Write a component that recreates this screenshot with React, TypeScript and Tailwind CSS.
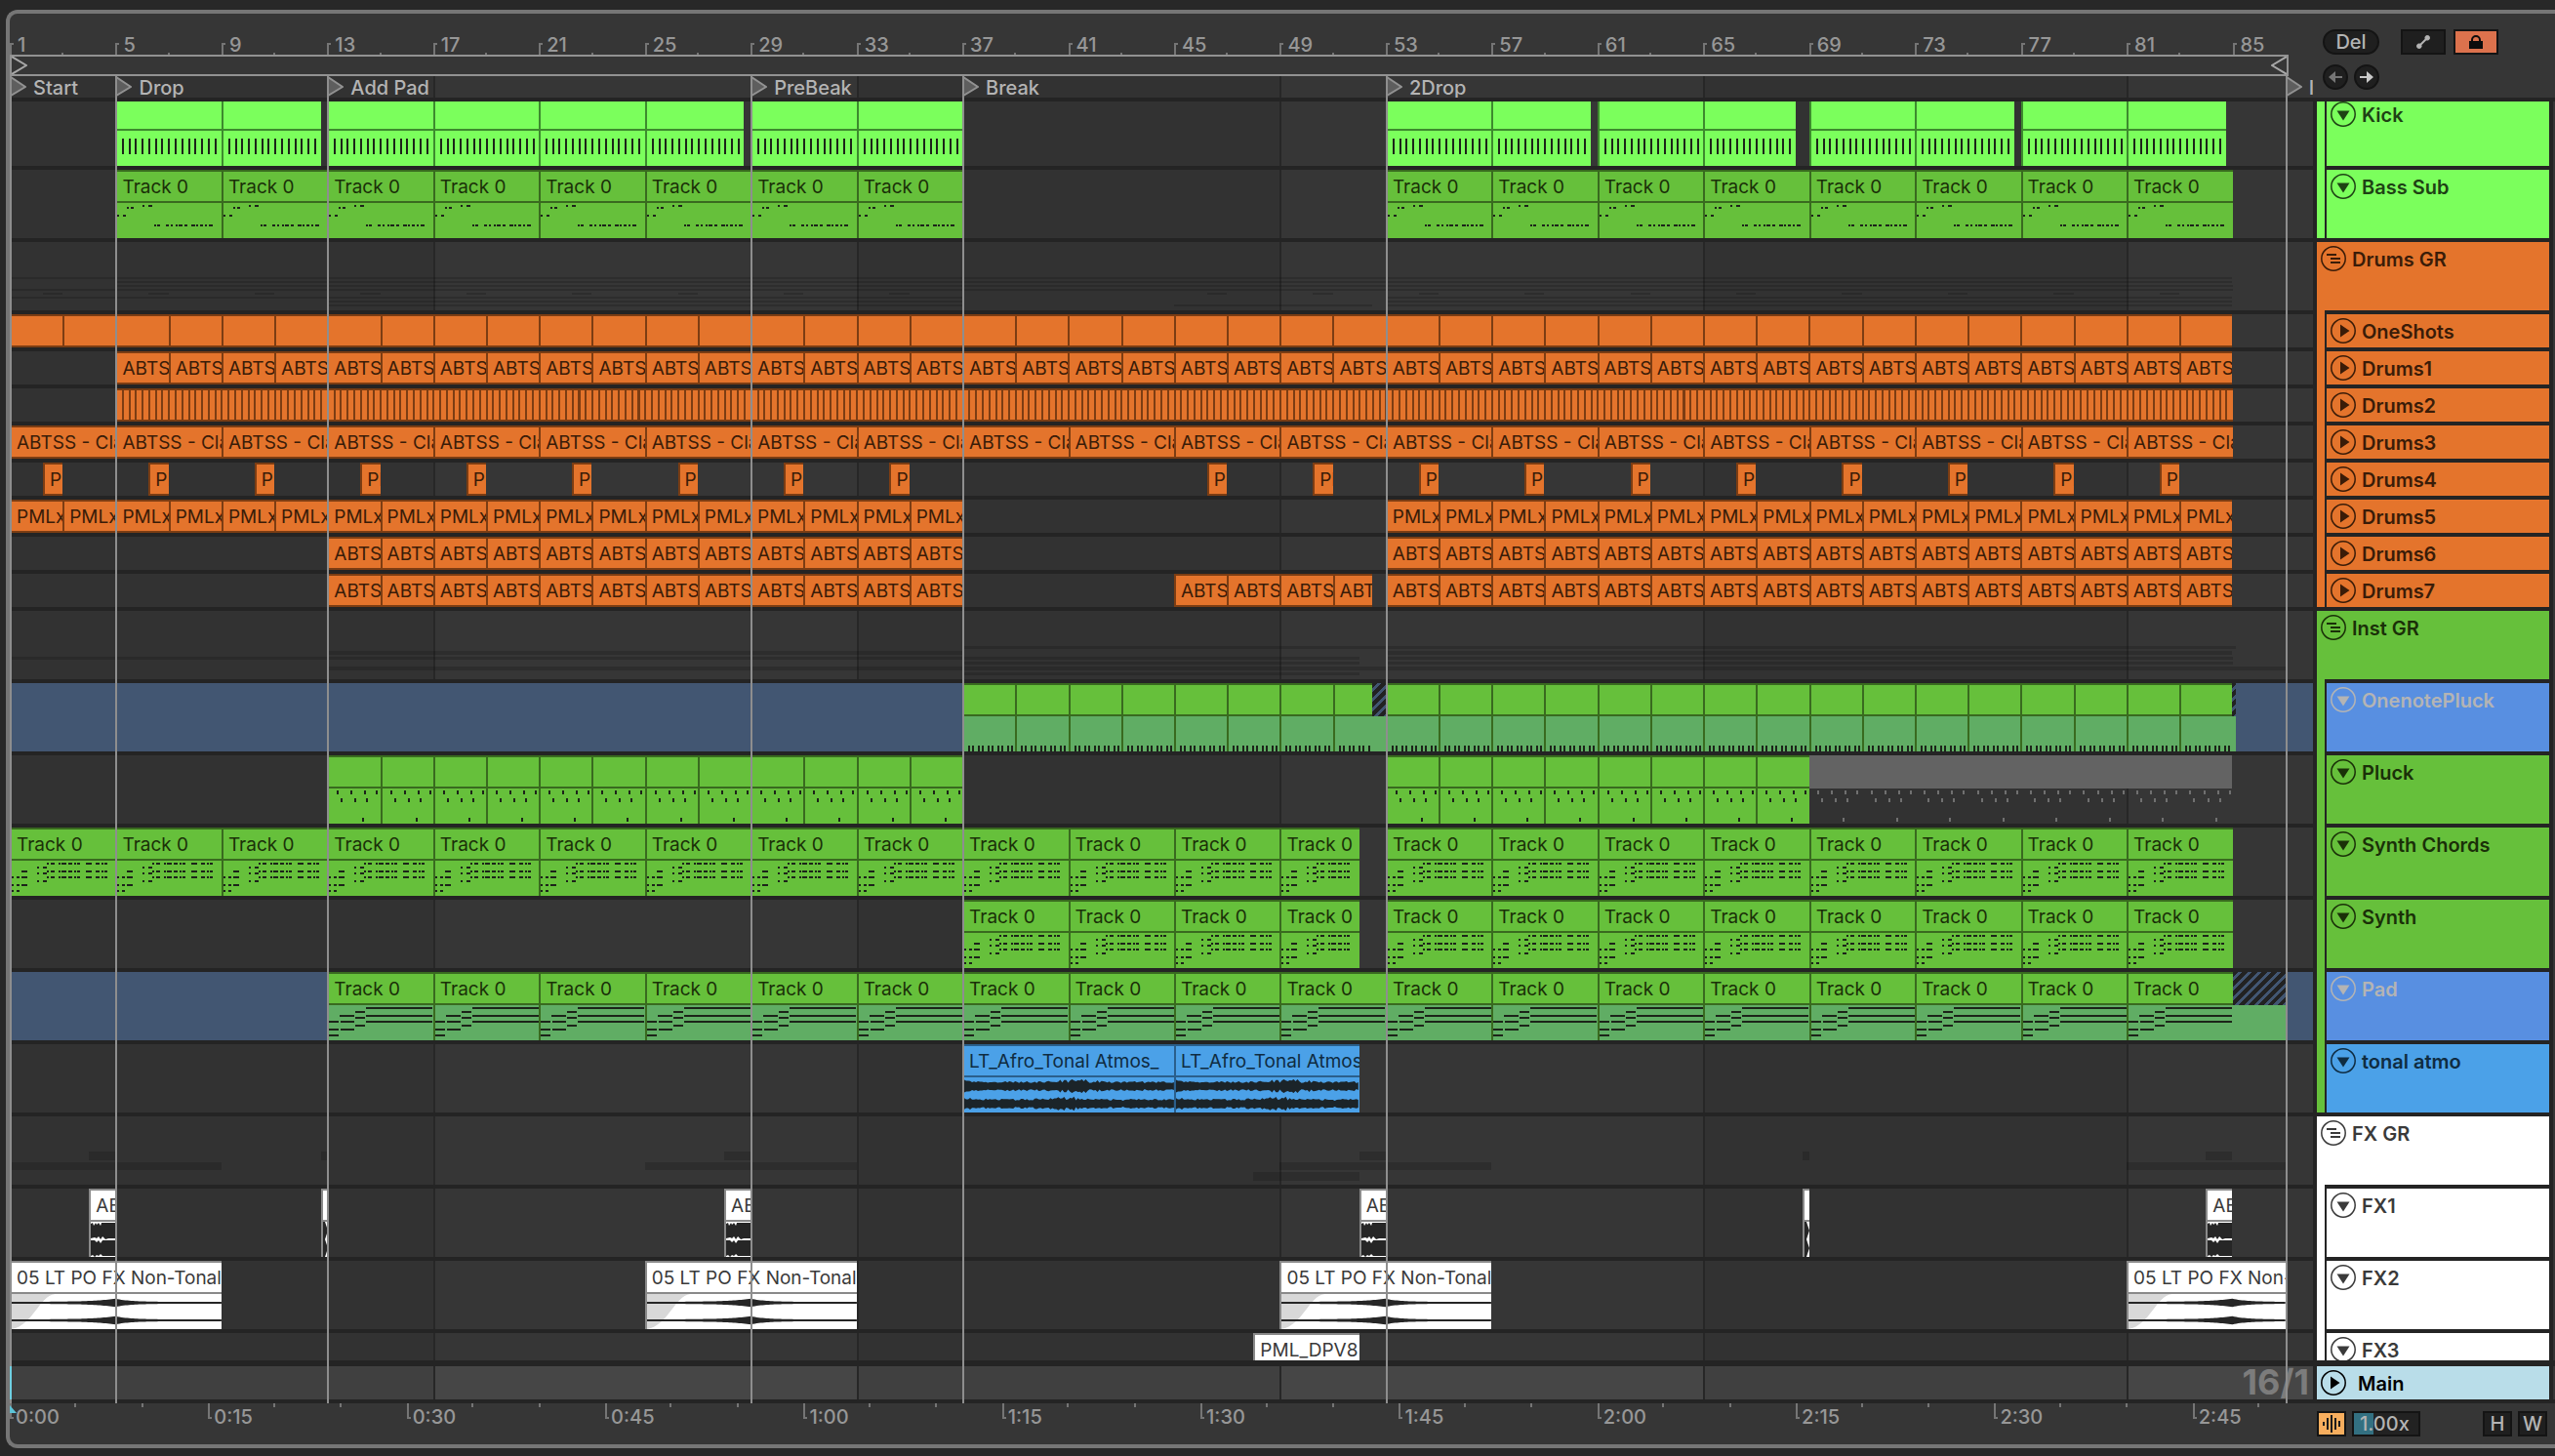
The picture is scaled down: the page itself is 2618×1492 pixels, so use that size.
import React from 'react';
import { clsx } from 'clsx';

type TTone = 'lime' | 'green' | 'orange' | 'blue' | 'white' | 'muted';
type TArt = 'kick' | 'bass' | 'oneNote' | 'pluck' | 'chords' | 'pad' | 'wave' | 'riser' | 'hit' | 'hats';
type TFold = 'open' | 'closed' | 'group';

interface IClip {
    start: number;
    end: number;
    label?: string;
    hatch?: boolean;
    tone?: TTone;
}

interface ITrack {
    name: string;
    tone: TTone;
    fold: TFold;
    art?: TArt;
    selected?: boolean;
    cut?: boolean;
    first?: boolean;
    clips: IClip[];
}

interface IGroup {
    name?: string;
    tone: TTone;
    tracks: ITrack[];
}

// Bars shown across the arrangement
const BARS = 87.04;
// Units per bar used by the clip drawings
const UNIT = 27;

const pct = (bars: number) => `${(bars / BARS) * 100}%`;

// Splits a range in equal clips, the last one may be shorter
const run = (start: number, end: number, size: number, label?: string): IClip[] => {
    const clips: IClip[] = [];
    for (let bar = start; bar < end; bar += size) {
        clips.push({ start: bar, end: Math.min(bar + size, end), label });
    }
    return clips;
};

const groups: IGroup[] = [
    {
        tone: 'lime',
        tracks: [
            {
                name: 'Kick', tone: 'lime', fold: 'open', art: 'kick', first: true,
                clips: [
                    ...run(5, 12.75, 4), ...run(13, 28.75, 4), ...run(29, 37, 4),
                    ...run(53, 60.75, 4), ...run(61, 68.5, 4), ...run(69, 76.75, 4), ...run(77, 84.75, 4),
                ],
            },
            {
                name: 'Bass Sub', tone: 'green', fold: 'open', art: 'bass',
                clips: [...run(5, 37, 4, 'Track 0'), ...run(53, 85, 4, 'Track 0')],
            },
        ],
    },
    {
        name: 'Drums GR',
        tone: 'orange',
        tracks: [
            { name: 'OneShots', tone: 'orange', fold: 'closed', clips: run(1, 85, 2) },
            { name: 'Drums1', tone: 'orange', fold: 'closed', clips: run(5, 85, 2, 'ABTSS') },
            { name: 'Drums2', tone: 'orange', fold: 'closed', art: 'hats', clips: run(5, 85, 80) },
            { name: 'Drums3', tone: 'orange', fold: 'closed', clips: run(1, 85, 4, 'ABTSS - Clap') },
            {
                name: 'Drums4', tone: 'orange', fold: 'closed',
                clips: [2, 6, 10, 14, 18, 22, 26, 30, 34, 46, 50, 54, 58, 62, 66, 70, 74, 78, 82].map((bar) => ({
                    start: bar + 0.25, end: bar + 1, label: 'PML',
                })),
            },
            { name: 'Drums5', tone: 'orange', fold: 'closed', clips: [...run(1, 37, 2, 'PMLxx'), ...run(53, 85, 2, 'PMLxx')] },
            { name: 'Drums6', tone: 'orange', fold: 'closed', clips: [...run(13, 37, 2, 'ABTSS'), ...run(53, 85, 2, 'ABTSS')] },
            {
                name: 'Drums7', tone: 'orange', fold: 'closed',
                clips: [...run(13, 37, 2, 'ABTSS'), ...run(45, 52.5, 2, 'ABTSS'), ...run(53, 85, 2, 'ABTSS')],
            },
        ],
    },
    {
        name: 'Inst GR',
        tone: 'green',
        tracks: [
            {
                name: 'OnenotePluck', tone: 'green', fold: 'open', art: 'oneNote', selected: true,
                clips: [
                    ...run(37, 52.5, 2), { start: 52.5, end: 53, hatch: true },
                    ...run(53, 85, 2), { start: 85, end: 85.15, hatch: true },
                ],
            },
            {
                name: 'Pluck', tone: 'green', fold: 'open', art: 'pluck',
                clips: [...run(13, 37, 2), ...run(53, 69, 2), { start: 69, end: 85, tone: 'muted' }],
            },
            {
                name: 'Synth Chords', tone: 'green', fold: 'open', art: 'chords',
                clips: [...run(1, 52, 4, 'Track 0'), ...run(53, 85, 4, 'Track 0')],
            },
            {
                name: 'Synth', tone: 'green', fold: 'open', art: 'chords',
                clips: [...run(37, 52, 4, 'Track 0'), ...run(53, 85, 4, 'Track 0')],
            },
            {
                name: 'Pad', tone: 'green', fold: 'open', art: 'pad', selected: true,
                clips: [...run(13, 85, 4, 'Track 0'), { start: 85, end: 87, hatch: true }],
            },
            {
                name: 'tonal atmo', tone: 'blue', fold: 'open', art: 'wave',
                clips: run(37, 52, 8, 'LT_Afro_Tonal Atmos_'),
            },
        ],
    },
    {
        name: 'FX GR',
        tone: 'white',
        tracks: [
            {
                name: 'FX1', tone: 'white', fold: 'open', art: 'hit',
                clips: [
                    { start: 4, end: 5, label: 'ABTSS' }, { start: 12.75, end: 13 },
                    { start: 28, end: 29, label: 'ABTSS' }, { start: 52, end: 53, label: 'ABTSS' },
                    { start: 68.75, end: 69 }, { start: 84, end: 85, label: 'ABTSS' },
                ],
            },
            {
                name: 'FX2', tone: 'white', fold: 'open', art: 'riser',
                clips: [
                    ...run(1, 9, 8, '05 LT PO FX Non-Tonal'), ...run(25, 33, 8, '05 LT PO FX Non-Tonal'),
                    ...run(49, 57, 8, '05 LT PO FX Non-Tonal'), ...run(81, 87, 8, '05 LT PO FX Non-Tonal'),
                ],
            },
            { name: 'FX3', tone: 'white', fold: 'open', cut: true, clips: run(48, 52, 4, 'PML_DPV8') },
        ],
    },
];

const locators = [
    { bar: 1, name: 'Start' },
    { bar: 5, name: 'Drop' },
    { bar: 13, name: 'Add Pad' },
    { bar: 29, name: 'PreBeak' },
    { bar: 37, name: 'Break' },
    { bar: 53, name: '2Drop' },
    { bar: 87, name: 'I' },
];

const clipTone: Record<TTone, string> = {
    lime: 'bg-[#7bff5c] border-[#3d8a2e] text-[#1e3d14]',
    green: 'bg-[#66c03b] border-[#396a1f] text-[#1a3008]',
    orange: 'bg-[#e4742c] border-[#7c3d13] text-[#3a1c08]',
    blue: 'bg-[#4ba1e8] border-[#2a5f8c] text-[#0f2c42]',
    white: 'bg-white border-[#8a8a8a] text-[#3a3a3a]',
    muted: 'border-[#636363] text-[#707070]',
};

const clipBorder: Record<TTone, string> = {
    lime: 'border-[#3d8a2e]',
    green: 'border-[#396a1f]',
    orange: 'border-[#7c3d13]',
    blue: 'border-[#2a5f8c]',
    white: 'border-[#8a8a8a]',
    muted: 'border-[#636363]',
};

const headTone: Record<TTone, string> = {
    lime: 'bg-[#7bff5c] text-[#1e4214]',
    green: 'bg-[#66c03b] text-[#1a3008]',
    orange: 'bg-[#e4742c] text-[#3a1c08]',
    blue: 'bg-[#4ba1e8] text-[#0f2c42]',
    white: 'bg-white text-[#3a3a3a]',
    muted: 'bg-[#636363] text-[#b0b0b0]',
};

// Notes are [y, height, [x, width]...] with x counted from the start of the pattern
type TNotes = [number, number, number[][]][];

const chordTail = [[38, 2], [42, 4], [50, 2], [53, 5], [60, 4], [66, 2], [69, 3], [78, 6], [88, 4], [94, 2], [97, 3]];

const patterns: Partial<Record<TArt, { length: number; notes: TNotes }>> = {
    kick: { length: 6.75, notes: [[8, 16, [[0, 2]]]] },
    bass: {
        length: 108,
        notes: [
            [2, 2, [[28, 2], [34, 4]]],
            [4, 2, [[12, 2], [16, 3]]],
            [12, 2, [[2, 2], [8, 3]]],
            [22, 2, [[40, 2], [43, 3], [52, 3], [57, 2], [62, 2], [65, 4], [71, 3], [78, 4], [83, 2], [87, 3], [92, 2], [96, 4]]],
        ],
    },
    oneNote: {
        length: 54,
        notes: [[30, 6, [6, 10, 16, 20, 26, 30, 36, 40, 46, 50].map((x) => [x, 2])]],
    },
    pluck: {
        length: 54,
        notes: [
            [2, 4, [[10, 2], [24, 2], [38, 2], [50, 2]]],
            [10, 4, [[14, 2], [28, 2], [40, 2]]],
            [30, 4, [[36, 2]]],
        ],
    },
    chords: {
        length: 108,
        notes: [
            [2, 2, chordTail],
            [6, 2, [[28, 2], [34, 4]]],
            [10, 2, [[12, 6], ...chordTail]],
            [12, 2, [[28, 2], [34, 4]]],
            [16, 2, [[2, 2], [7, 3], [12, 6], ...chordTail]],
            [20, 2, [[28, 2], [34, 4]]],
            [24, 2, [[2, 2], [7, 3], [12, 6]]],
            [30, 2, [[2, 2], [7, 3]]],
        ],
    },
    pad: {
        length: 108,
        notes: [
            [2, 2, [[40, 68]]],
            [6, 2, [[29, 10]]],
            [10, 2, [[13, 15], [40, 68]]],
            [12, 2, [[29, 10]]],
            [16, 2, [[2, 10], [14, 14], [40, 68]]],
            [20, 2, [[29, 10]]],
            [24, 2, [[2, 10], [14, 14]]],
            [30, 2, [[2, 10]]],
        ],
    },
};

const notePath = (art: TArt, width: number) => {
    const pattern = patterns[art];
    if (!pattern) return '';
    let d = '';
    const from = art === 'kick' ? pattern.length : 0;
    for (let offset = from; offset < width - 2; offset += pattern.length) {
        pattern.notes.forEach(([y, h, spans]) => {
            spans.forEach(([x, w]) => {
                if (offset + x + w <= width + 1) d += `M${offset + x} ${y}h${w}v${h}h${-w}z`;
            });
        });
    }
    return d;
};

// Mirrored wave around a centre line
const wavePath = (centre: number, width: number, amp: (x: number) => number) => {
    let top = `M0 ${centre}`;
    let bottom = '';
    for (let x = 0; x <= width; x += 2) {
        const a = amp(x);
        top += `L${x} ${(centre - a).toFixed(1)}`;
        bottom = `L${x} ${(centre + a).toFixed(1)}` + bottom;
    }
    return `${top}${bottom}Z`;
};

const noise = (x: number, seed: number) => {
    const n = Math.sin(x * 127.1 + seed * 311.7) * 43758.5;
    return n - Math.floor(n);
};
const atmoAmp = (seed: number, peak: number) => (x: number) =>
    3 + noise(x, seed) * 2 + 3 * Math.exp(-(((x - peak) / 26) ** 2)) * noise(x, seed + 1) + 2 * Math.exp(-x / 14);
const riserAmp = (x: number) => {
    const rise = x < 108 ? Math.exp((x - 108) / 22) : Math.exp((108 - x) / 14);
    return 1 + 3.2 * rise;
};

const ClipArt: React.FC<{ art: TArt; bars: number }> = ({ art, bars }) => {
    const width = bars * UNIT;
    const box = `2 0 ${width - 2} 36`;

    if (art === 'wave') {
        return (
            <svg className="block h-9 w-full fill-[#1b2429]" viewBox={box} preserveAspectRatio="none">
                <path d={wavePath(9, width, atmoAmp(2, 120))} />
                <path d={wavePath(27, width, atmoAmp(5, 104))} />
            </svg>
        );
    }
    if (art === 'riser') {
        return (
            <svg className="block h-9 w-full fill-[#262626]" viewBox={box} preserveAspectRatio="none">
                <path d="M0 0H46C30 2 24 32 2 36H0Z" className="fill-[#d8d8d8]" />
                <path d={wavePath(9, width, riserAmp)} />
                <path d={wavePath(27, width, riserAmp)} />
            </svg>
        );
    }
    if (art === 'hit') {
        return (
            <svg className="block h-9 w-full bg-white fill-[#262626]" viewBox={box} preserveAspectRatio="none">
                {bars < 1 ? (
                    <path d="M0 0H4L7 9L4 18L7 27L4 36H0Z" />
                ) : (
                    <path d="M2 2L4 1L5 4L7 1L8 3L10 1L12 4L13 1H28V17H20L17 18L14 15L12 18L10 15L8 17L6 16L2 17ZM2 19H6L8 21L10 19L12 22L14 19L17 19H28V35H14L12 33L10 35L8 34L6 36L4 34L2 35Z" />
                )}
            </svg>
        );
    }
    return (
        <svg
            className={clsx('block h-9 w-full', bars > 8 ? 'fill-[#707070]' : 'fill-[#1c2419]')}
            viewBox={box}
            preserveAspectRatio="none"
            shapeRendering="crispEdges"
        >
            <path d={notePath(art, width)} />
        </svg>
    );
};

const hatsPath = Array.from({ length: 320 }, (_, i) => `M${i * 6.75} 0h2v30h-2z`).join('');

const Clip: React.FC<{ clip: IClip; gap: number; track: ITrack }> = ({ clip, gap, track }) => {
    const bars = clip.end - clip.start;
    const tone = clip.tone ?? track.tone;
    const place = { width: pct(bars), marginLeft: pct(gap) };

    if (clip.hatch) {
        return (
            <div className="h-full shrink-0" style={place}>
                <div className="h-[34px] bg-[repeating-linear-gradient(135deg,#222222_0px,#222222_4px,#425672_4px,#425672_7px)]" />
                <div className="h-9 bg-[#60ad64]" />
            </div>
        );
    }
    if (tone === 'muted') {
        return (
            <div className="h-full shrink-0" style={place}>
                <div className="h-[34px] bg-[#636363]" />
                {track.art && <ClipArt art={track.art} bars={bars} />}
            </div>
        );
    }
    if (track.art === 'hats') {
        return (
            <div className={clsx('h-full shrink-0 border-y-2', clipTone[tone])} style={place}>
                <svg className="block h-full w-full fill-[#7c3d13]" viewBox="0 0 2160 30" preserveAspectRatio="none" shapeRendering="crispEdges">
                    <path d={hatsPath} />
                </svg>
            </div>
        );
    }
    return (
        <div
            className={clsx('h-full shrink-0 overflow-hidden border-t-2 border-l-2', track.fold === 'closed' && 'border-b-2', clipTone[tone])}
            style={place}
        >
            <div className="h-[30px] overflow-hidden pl-[5px] text-[19px] leading-8 whitespace-nowrap">{clip.label}</div>
            {track.art && (
                <div className={clsx('border-t-2', clipBorder[tone], track.selected && 'bg-[#60ad64]')}>
                    <ClipArt art={track.art} bars={bars} />
                </div>
            )}
        </div>
    );
};

// Shaded blocks of sixteen bars behind every lane
const LaneGrid: React.FC<{ main?: boolean }> = ({ main = false }) => (
    <div className="col-start-1 row-start-1 flex min-w-0">
        {[1, 17, 33, 49, 65, 81].map((bar, i) => (
            <div
                key={bar}
                className={clsx(
                    i > 0 && 'border-l-2 border-[#272727]',
                    main ? (i % 2 ? 'bg-[#464646]' : 'bg-[#404040]') : (i % 2 ? 'bg-[#363636]' : 'bg-[#323232]'),
                    bar === 81 ? 'flex-1' : 'shrink-0'
                )}
                style={bar === 81 ? undefined : { width: pct(16) }}
            />
        ))}
    </div>
);

const withGaps = (clips: IClip[]) =>
    clips.map((clip, i) => ({ clip, gap: clip.start - (i ? clips[i - 1].end : 1) }));

const Lane: React.FC<{ track: ITrack }> = ({ track }) => (
    <div
        className={clsx(
            'grid grid-cols-1 overflow-hidden',
            track.fold === 'closed' ? 'h-[34px]' : track.cut ? 'h-7' : 'h-[70px]',
            track.first && '-mt-1'
        )}
    >
        {track.selected ? <div className="col-start-1 row-start-1 bg-[#425672]" /> : <LaneGrid />}
        <div className="col-start-1 row-start-1 flex min-w-0 overflow-hidden">
            {withGaps(track.clips).map(({ clip, gap }) => (
                <Clip key={clip.start} clip={clip} gap={gap} track={track} />
            ))}
        </div>
    </div>
);

const GroupLane: React.FC<{ group: IGroup }> = ({ group }) => (
    <div className="grid h-[70px] grid-cols-1">
        <LaneGrid />
        <div className="col-start-1 row-start-1 flex min-w-0 flex-col gap-[2px] pt-9 pb-1">
            {group.tracks.map((track) => (
                <div key={track.name} className="flex flex-1">
                    {withGaps(track.clips).map(({ clip, gap }) => (
                        <div
                            key={clip.start}
                            className="h-full shrink-0 bg-black/15"
                            style={{ width: pct(clip.end - clip.start), marginLeft: pct(gap) }}
                        />
                    ))}
                </div>
            ))}
        </div>
    </div>
);

const FoldButton: React.FC<{ fold: TFold; name: string }> = ({ fold, name }) => (
    <button type="button" aria-label={`Fold ${name}`} className="block h-[26px] w-[26px] shrink-0">
        <svg viewBox="0 0 26 26" className="block fill-current stroke-current">
            <circle cx="13" cy="13" r="12.2" fill="none" strokeWidth="1.5" />
            {fold === 'open' && <path d="M6.500 9.500h13l-6.500 10z" stroke="none" />}
            {fold === 'closed' && <path d="M10 6.500v13l9.500-6.500z" stroke="none" />}
            {fold === 'group' && <path d="M6 9h10M10 13h10M10 17h10" fill="none" strokeWidth="2" />}
        </svg>
    </button>
);

const TrackHead: React.FC<{ track: ITrack; tone: TTone }> = ({ track, tone }) => (
    <div
        className={clsx(
            'flex items-start gap-[6px] overflow-hidden pl-1',
            track.fold === 'closed' ? 'h-[34px]' : track.cut ? 'h-7' : 'h-[70px]',
            track.first && '-mt-1',
            track.selected ? 'bg-[#588fe1] text-[#b4b4b4]' : headTone[tone]
        )}
    >
        <div className="pt-1">
            <FoldButton fold={track.fold} name={track.name} />
        </div>
        <span className="pt-[2px] text-[20px] leading-8 font-semibold">{track.name}</span>
    </div>
);

const GroupHead: React.FC<{ group: IGroup }> = ({ group }) => (
    <div className={headTone[group.tone]}>
        {group.name && (
            <div className="flex h-[70px] items-start gap-[6px] pl-1">
                <div className="pt-1">
                    <FoldButton fold="group" name={group.name} />
                </div>
                <span className="pt-[2px] text-[20px] leading-8 font-semibold">{group.name}</span>
            </div>
        )}
        <div className={clsx('ml-2 flex flex-col gap-1 bg-[#242424] pl-[2px]', group.name && 'pt-1')}>
            {group.tracks.map((track) => (
                <TrackHead key={track.name} track={track} tone={track.tone === 'blue' ? 'blue' : group.tone} />
            ))}
        </div>
    </div>
);

const BarRuler: React.FC = () => (
    <div className="flex h-[42px] items-end">
        {Array.from({ length: 22 }, (_, i) => i * 4 + 1).map((bar) => (
            <div key={bar} className="flex shrink-0 items-end" style={{ width: pct(bar === 85 ? 2 : 4) }}>
                <div className="flex h-3 w-0 grow items-start">
                    <div className="h-3 w-1 shrink-0 border-t-2 border-l-2 border-[#757575]" />
                    <span className="-mt-[10px] pl-1 text-[20px] leading-6 font-medium text-[#979797]">{bar}</span>
                </div>
                {bar < 85 && <div className="h-[2px] w-0 grow border-l-2 border-[#757575]" />}
            </div>
        ))}
    </div>
);

const LoopBrace: React.FC = () => (
    <div className="flex h-[22px] justify-between border-2 border-[#929292]" style={{ width: pct(86.1) }}>
        <svg viewBox="0 0 16 18" className="h-[18px] w-4 fill-none stroke-[#a8a8a8] stroke-2">
            <path d="M0 0L15 9L0 18" />
        </svg>
        <svg viewBox="0 0 16 18" className="h-[18px] w-4 fill-none stroke-[#a8a8a8] stroke-2">
            <path d="M16 0L1 9L16 18" />
        </svg>
    </div>
);

const LocatorRow: React.FC = () => (
    <div className="grid h-[22px] grid-cols-1">
        <LaneGrid />
        <div className="col-start-1 row-start-1 flex min-w-0 overflow-hidden">
            {locators.map((locator, i) => (
                <div
                    key={locator.bar}
                    className="flex shrink-0 gap-[7px]"
                    style={{ width: pct((locators[i + 1]?.bar ?? BARS + 1) - locator.bar) }}
                >
                    <svg viewBox="0 0 17 22" className="h-[22px] w-[17px] shrink-0 fill-[#5e5e5e] stroke-[#929292] stroke-2">
                        <path d="M1 1V20L16 11Z" />
                    </svg>
                    <span className="text-[20px] leading-6 font-medium whitespace-nowrap text-[#b4b4b4]">{locator.name}</span>
                </div>
            ))}
        </div>
    </div>
);

const LocatorLines: React.FC = () => (
    <div className="pointer-events-none absolute top-16 right-[248px] bottom-[42px] left-0">
        {locators.map((locator) => (
            <div key={locator.bar} className="absolute inset-y-0 w-[2px] bg-[#8e8e8e]" style={{ left: pct(locator.bar - 1) }} />
        ))}
    </div>
);

const timeLabels = ['0:00', '0:15', '0:30', '0:45', '1:00', '1:15', '1:30', '1:45', '2:00', '2:15', '2:30', '2:45'];

const TimeRuler: React.FC = () => (
    <div className="flex min-w-0 flex-1 items-start overflow-hidden">
        {timeLabels.map((label) => (
            <div key={label} className="flex shrink-0 items-start" style={{ width: pct(7.5) }}>
                <div className="flex w-0 grow items-start">
                    <div className="h-4 w-1 shrink-0 border-b-2 border-l-2 border-[#757575]" />
                    <span className="pt-[2px] pl-[2px] text-[20px] leading-6 font-medium text-[#979797]">{label}</span>
                </div>
                <div className="h-1 w-0 grow border-l-2 border-[#757575]" />
                <div className="h-1 w-0 grow border-l-2 border-[#757575]" />
            </div>
        ))}
    </div>
);

const TopControls: React.FC = () => (
    <div className="flex w-[248px] shrink-0 flex-col gap-[10px] pt-4 pl-[10px]">
        <div className="flex">
            <button type="button" className="h-[26px] w-[58px] rounded-full border-2 border-[#141414] bg-[#1f1f1f] text-[20px] leading-[22px] font-medium text-[#b4b4b4]">
                Del
            </button>
            <button type="button" aria-label="Automation mode" className="ml-[22px] flex h-[26px] w-[46px] items-center justify-center border-2 border-[#141414] bg-[#1f1f1f]">
                <svg viewBox="0 0 14 14" className="h-[14px] w-[14px] fill-[#b4b4b4] stroke-[#b4b4b4]">
                    <path d="M3 11L11 3" strokeWidth="2" />
                    <circle cx="2.800" cy="11.200" r="2.300" />
                    <circle cx="11.200" cy="2.800" r="2.300" />
                </svg>
            </button>
            <button type="button" aria-label="Lock envelopes" className="ml-2 flex h-[26px] w-[46px] items-center justify-center border-2 border-[#141414] bg-[#dc724d]">
                <svg viewBox="0 0 14 14" className="h-[14px] w-[14px]">
                    <path d="M3 7V5a4 4 0 0 1 8 0v2" fill="none" stroke="#0c0c0c" strokeWidth="2" />
                    <path d="M0 6h14v8H0z" fill="#0c0c0c" />
                </svg>
            </button>
        </div>
        <div className="flex gap-[6px]">
            <button type="button" aria-label="Previous locator" className="h-[26px] w-[26px] rounded-full border-2 border-[#141414] bg-[#1f1f1f]">
                <svg viewBox="0 0 22 22" className="fill-[#757575]">
                    <path d="M4 11L11 5V10H18V12H11V17Z" />
                </svg>
            </button>
            <button type="button" aria-label="Next locator" className="h-[26px] w-[26px] rounded-full border-2 border-[#141414] bg-[#1f1f1f]">
                <svg viewBox="0 0 22 22" className="fill-[#c8c8c8]">
                    <path d="M18 11L11 5V10H4V12H11V17Z" />
                </svg>
            </button>
        </div>
    </div>
);

const BottomControls: React.FC = () => (
    <div className="flex w-[248px] shrink-0 items-start pt-2 pr-2 pl-1">
        <button type="button" aria-label="Waveform zoom" className="h-[26px] w-[30px] border-2 border-[#141414] bg-[#f7ae5e]">
            <svg viewBox="0 0 26 22" className="block fill-none stroke-[#1c1c1c] stroke-2">
                <path d="M5 9V13M9 5V17M13 2V20M17 5V17M21 8V14" />
            </svg>
        </button>
        <input
            aria-label="Track zoom"
            defaultValue="1.00x"
            className="ml-[6px] h-[26px] w-[70px] border-2 border-[#141414] bg-[linear-gradient(to_right,#337081_20px,#222222_20px)] pl-[6px] text-[20px] leading-[22px] font-medium text-[#b4b4b4]"
        />
        <button type="button" className="ml-auto h-[26px] w-[30px] border-2 border-[#141414] bg-[#1f1f1f] text-[20px] leading-[22px] font-medium text-[#b4b4b4]">
            H
        </button>
        <button type="button" className="ml-[6px] h-[26px] w-[30px] border-2 border-[#141414] bg-[#1f1f1f] text-[20px] leading-[22px] font-medium text-[#b4b4b4]">
            W
        </button>
    </div>
);

const App: React.FC = () => {
    return (
        <div className="min-h-screen bg-[#282828] pt-[10px] pb-2 pl-[6px] font-['Inter',sans-serif]">
            <main className="relative flex flex-col overflow-hidden rounded-l-xl border-y-4 border-l-4 border-[#767676] bg-[#363636]">
                <div className="flex">
                    <div className="min-w-0 flex-1">
                        <BarRuler />
                        <LoopBrace />
                        <LocatorRow />
                    </div>
                    <TopControls />
                </div>

                <div className="flex gap-1 bg-[#242424] pt-1">
                    <div className="flex min-w-0 flex-1 flex-col gap-1 overflow-hidden">
                        {groups.map((group) => (
                            <React.Fragment key={group.tone}>
                                {group.name && <GroupLane group={group} />}
                                {group.tracks.map((track) => (
                                    <Lane key={track.name} track={track} />
                                ))}
                            </React.Fragment>
                        ))}
                    </div>
                    <div className="flex w-[238px] shrink-0 flex-col gap-1 overflow-hidden">
                        {groups.map((group) => (
                            <GroupHead key={group.tone} group={group} />
                        ))}
                    </div>
                    <div className="w-[2px] shrink-0 bg-[#363636]" />
                </div>

                <div className="flex gap-1 bg-[#242424] pt-[6px] pb-1">
                    <div className="grid h-[34px] min-w-0 flex-1 grid-cols-1">
                        <LaneGrid main />
                        <div className="col-start-1 row-start-1 flex justify-end pr-1">
                            <span className="text-[36px] leading-8 font-bold text-[#7c7c7c]">16/1</span>
                        </div>
                    </div>
                    <div className="flex w-[238px] shrink-0 items-start gap-3 bg-[#b9dde9] pl-1 text-black">
                        <div className="pt-1">
                            <FoldButton fold="closed" name="Main" />
                        </div>
                        <span className="pt-[2px] text-[20px] leading-8 font-semibold">Main</span>
                    </div>
                    <div className="w-[2px] shrink-0 bg-[#363636]" />
                </div>

                <div className="flex h-[42px]">
                    <TimeRuler />
                    <BottomControls />
                </div>
                <LocatorLines />
                {/* Play position */}
                <div className="pointer-events-none absolute bottom-8 left-0 flex h-12 flex-col justify-between">
                    <div className="h-[34px] w-[2px] bg-[#6fd0e2]" />
                    <svg viewBox="0 0 7 8" className="h-2 w-[7px] fill-[#5cc4d8]">
                        <path d="M0 0L7 8H0Z" />
                    </svg>
                </div>
            </main>
        </div>
    );
};

export default App;
